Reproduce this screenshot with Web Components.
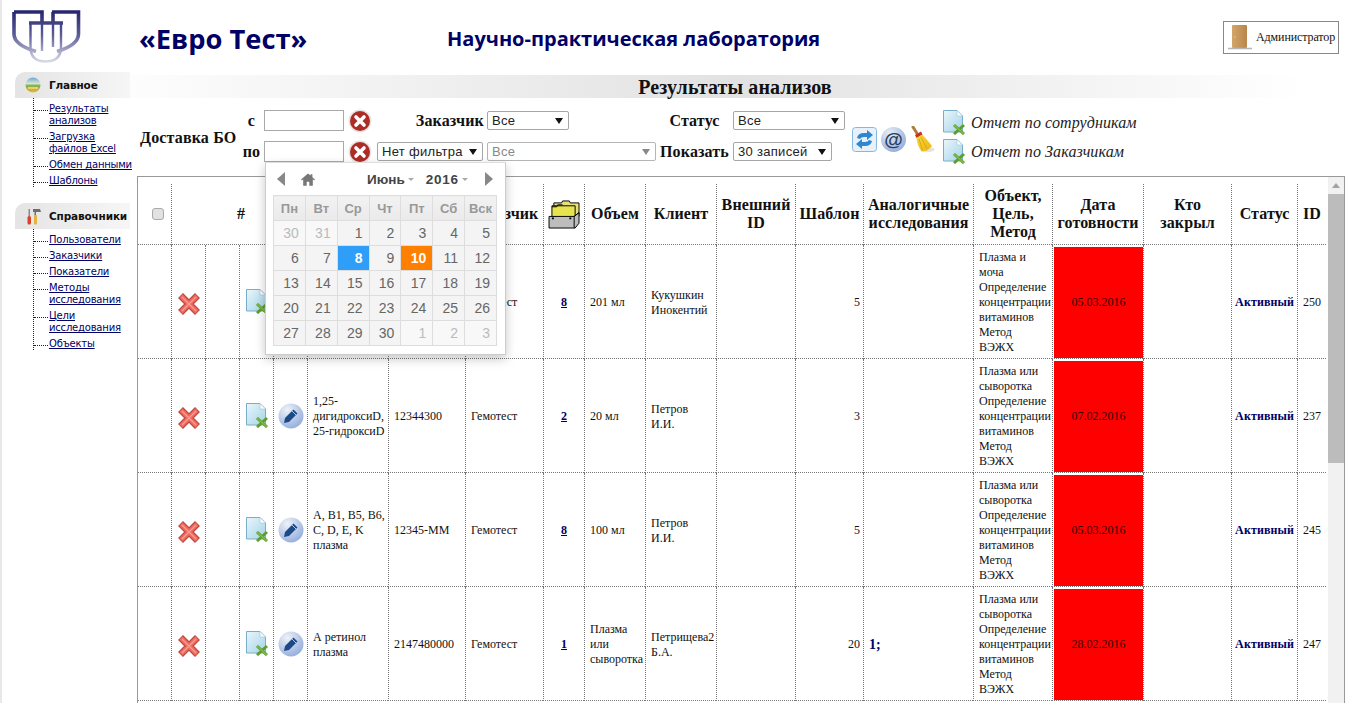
<!DOCTYPE html>
<html lang="ru"><head><meta charset="utf-8"><title>Евро Тест</title>
<style>
html,body{margin:0;height:703px;overflow:hidden;background:#fff;font-family:"Liberation Serif",serif}
</style></head><body>
<euro-app></euro-app>
<script>
const ICONS={
logo:`<svg width="70" height="56" viewBox="0 0 70 56" fill="none"><defs><linearGradient id="lg" gradientUnits="userSpaceOnUse" x1="0" y1="0" x2="0" y2="54"><stop offset="0" stop-color="#24246f"/><stop offset=".45" stop-color="#5a5a95"/><stop offset="1" stop-color="#e2e2ec"/></linearGradient></defs><g stroke="url(#lg)" stroke-width="3.6"><path d="M2 2H30V14M2 2V24Q2 35 24 41.5"/><path d="M40 2H66.5V24Q66.5 35 45 41.5M41 2V14"/><path d="M17 13H51"/><path d="M18.500 13V37Q18.500 51.500 33.500 51.500Q49 51.500 49 37V13" stroke-width="2.4"/><path d="M30 13V41M41 13V37" stroke-width="2.4"/></g></svg>`,
globe:`<svg width="16" height="16" viewBox="0 0 16 16"><defs><linearGradient id="g1" x1="0" y1="0" x2="0" y2="1"><stop offset="0" stop-color="#6fa6d8"/><stop offset=".4" stop-color="#d5e6d0"/><stop offset=".55" stop-color="#7dae4e"/><stop offset="1" stop-color="#e9b93e"/></linearGradient></defs><circle cx="8" cy="8" r="7.500" fill="url(#g1)"/><path d="M3 10h10v2H3z" fill="#f0cf63"/></svg>`,
tools:`<svg width="15" height="17" viewBox="0 0 15 17"><rect x="1.500" y="8" width="3.500" height="8.500" rx="1.500" fill="#d8432c"/><rect x="2.500" y="1" width="1.500" height="7" fill="#8a8a8a"/><path d="M7 1h7l1 3H11V4h-1v12H8.500V4H7z" fill="#6e6e6e"/><rect x="8" y="7" width="3" height="9.500" rx="1" fill="#e4b23d"/></svg>`,
door:`<svg width="24" height="25" viewBox="0 0 24 25"><defs><linearGradient id="d1" x1="0" y1="0" x2="1" y2="0"><stop offset="0" stop-color="#d3a56a"/><stop offset="1" stop-color="#b8864a"/></linearGradient></defs><rect x="4" y="0" width="15" height="23" rx="1" fill="url(#d1)"/><circle cx="7" cy="12" r=".8" fill="#f2d070"/><path d="M0 23.500H24" stroke="#b5b5b5" stroke-width="1.500"/></svg>`,
clear:`<svg width="24" height="24" viewBox="0 0 24 24"><circle cx="12" cy="12" r="11.500" fill="#e4e4e4"/><circle cx="12" cy="12" r="10" fill="#ad2c25"/><path d="M8 8l8 8M16 8l-8 8" stroke="#fff" stroke-width="3.600" stroke-linecap="round"/></svg>`,
refresh:`<svg width="25" height="25" viewBox="0 0 25 25"><rect x=".5" y=".5" width="24" height="24" rx="3" fill="#e6f1fb" stroke="#86b6e2"/><path d="M5 11q1-5 7-5h3V3l6 5-6 5V10h-3q-3 0-4 2z" fill="#2f86d0"/><path d="M20 14q-1 5-7 5h-3v3l-6-5 6-5v3h3q3 0 4-2z" fill="#2f86d0"/></svg>`,
at:`<svg width="25" height="25" viewBox="0 0 25 25"><defs><radialGradient id="a1" cx=".35" cy=".25" r=".9"><stop offset="0" stop-color="#e8edf7"/><stop offset="1" stop-color="#8aa5d6"/></radialGradient></defs><circle cx="12.500" cy="12.500" r="12.500" fill="url(#a1)"/><text x="12.500" y="18.500" text-anchor="middle" font-family="Liberation Sans" font-weight="700" font-size="19" fill="#27405f">@</text></svg>`,
broom:`<svg width="25" height="27" viewBox="0 0 25 27"><defs><linearGradient id="b1" x1="0" y1="0" x2="1" y2="1"><stop offset="0" stop-color="#f8d93a"/><stop offset="1" stop-color="#eeb312"/></linearGradient></defs><ellipse cx="18" cy="23.500" rx="6.500" ry="2.500" fill="#e2e2e2"/><path d="M3 1L8 9" stroke="#b07c40" stroke-width="3" stroke-linecap="round"/><path d="M5 9L11 5.500 12.500 8.500 6.500 12z" fill="#c8321e"/><path d="M6.500 12L12.500 8.500Q18 15 22 20Q17 26 11.500 25.500Q7 19 6.500 12z" fill="url(#b1)"/><path d="M9 13l3.500 11M11 11l6 12" stroke="#cf9a10" stroke-width=".7"/></svg>`,
doc:`<svg width="23" height="25" viewBox="0 0 23 25"><defs><linearGradient id="x1" x1="0" y1="0" x2="1" y2="1"><stop offset="0" stop-color="#eaf6fb"/><stop offset="1" stop-color="#a3d3e8"/></linearGradient></defs><path d="M.5.5H14L19.500 6V22H.5z" fill="url(#x1)" stroke="#79aecb"/><path d="M14 .5V6h5.500z" fill="#fff" stroke="#9cc5da" stroke-width=".6"/><path d="M11 15l10 9M21 15l-10 9" stroke="#5e9e2e" stroke-width="3"/><path d="M11 15l10 9" stroke="#80bd44" stroke-width="1.500"/></svg>`,
pencil:`<svg width="26" height="26" viewBox="0 0 26 26"><defs><radialGradient id="p1" cx=".35" cy=".25" r=".9"><stop offset="0" stop-color="#eef2f9"/><stop offset="1" stop-color="#88a4d8"/></radialGradient></defs><circle cx="13" cy="13" r="12.500" fill="url(#p1)"/><path d="M15.500 6.500l4 4L11 19l-5 1 1-5z" fill="#1c4a86"/><path d="M14 8l4 4" stroke="#dfe8f5" stroke-width=".8"/></svg>`,
del:`<svg width="24" height="24" viewBox="0 0 24 24"><path d="M3.500 3.500l17 17M20.500 3.500l-17 17" stroke="#b9453d" stroke-width="7" stroke-linecap="butt"/><path d="M4 4l16 16M20 4L4 20" stroke="#f0695e" stroke-width="4.600" stroke-linecap="butt"/><path d="M5 5l14 14M19 5L5 19" stroke="#f9a096" stroke-width="1.200"/></svg>`,
folder:`<svg width="33" height="29" viewBox="0 0 34 30"><path d="M6 3h8l1-2h7l1 2h9v14H6z" fill="#e8e07a" stroke="#000"/><path d="M4 6h24v12H4z" fill="#e6e34e" stroke="#000"/><path d="M4 7h5l1-2h5" fill="none" stroke="#000"/><path d="M1 17h26l5-4v11l-4 5H1z" fill="#bdbdbd" stroke="#000" stroke-linejoin="round"/><path d="M27 17v12M27 17l5-4" stroke="#000"/><path d="M4 19h2M22 19h2" stroke="#000" stroke-width="2"/></svg>`
};
function def(name,css,html,init){
  customElements.define(name,class extends HTMLElement{
    connectedCallback(){
      if(this.shadowRoot)return;
      const r=this.attachShadow({mode:"open"});
      r.innerHTML=`<style>${css}</style>`+(typeof html==="function"?html(this):html);
      if(init)init(r,this);
    }
  });
}
def("euro-icon",":host{display:inline-flex;line-height:0;vertical-align:middle}",el=>ICONS[el.getAttribute("name")]||"");

def("euro-header",`
:host{display:flex;align-items:center;height:72px;box-sizing:border-box;position:relative;font-family:"Open Sans",sans-serif;color:#000066}
.logo{margin:3px 0 0 12px;width:127px}
h1{margin:0;font-size:27.300px;font-weight:700;width:308px;padding-top:4px;white-space:nowrap}
h2{margin:0;font-size:20px;font-weight:700;padding-top:4px;flex:1;white-space:nowrap}
euro-user{margin:3px 11px 0 0}
`,`<div class="logo"><euro-icon name="logo"></euro-icon></div><h1>«Евро Тест»</h1><h2>Научно-практическая лаборатория</h2><euro-user></euro-user>`);

def("euro-user",`:host{display:flex;align-items:center;box-sizing:border-box;width:116px;height:33px;border:1px solid #888;padding:0 3px 0 4px;gap:4px;font:12px "Liberation Serif",serif;color:#111;white-space:nowrap;letter-spacing:-.1px}`,
`<euro-icon name="door"></euro-icon><span>Администратор</span>`);

def("nav-group",`
:host{display:block;margin-bottom:16px;font-family:"DejaVu Sans",sans-serif}
.head{display:flex;align-items:center;height:26px;margin-left:15px;width:115px;box-sizing:border-box;padding-left:10px;gap:8px;font-size:10.500px;letter-spacing:-.15px;font-weight:700;color:#111;background:linear-gradient(to right,#e4e4e4,#f6f6f6);border-top-left-radius:10px;white-space:nowrap}
.ic{width:16px;display:flex;justify-content:center}
ul{list-style:none;margin:0 0 0 33px;padding:5px 0 0;border-left:1px dotted #123;width:97px;box-sizing:border-box}
li{position:relative;padding-left:15px;margin-bottom:4px;font-size:10px;letter-spacing:-.2px;line-height:12px;white-space:nowrap}
li::before{content:"";position:absolute;left:0;top:7px;width:14px;border-top:1px dotted #123}
li:last-child{margin-bottom:0}
a{color:#000066;text-decoration:underline}
`,el=>`<div class="head"><span class="ic"><euro-icon name="${el.getAttribute("icon")}"></euro-icon></span>${el.getAttribute("label")}</div><ul>${el.getAttribute("items").split("|").map(t=>`<li><a href="#">${t.replace("/","<br>")}</a></li>`).join("")}</ul>`);

def("euro-sidebar",`:host{display:block;width:130px;flex:none}`,
`<nav-group icon="globe" label="Главное" items="Результаты/анализов|Загрузка/файлов Excel|Обмен данными|Шаблоны"></nav-group>
<nav-group icon="tools" label="Справочники" items="Пользователи|Заказчики|Показатели|Методы/исследования|Цели/исследования|Объекты"></nav-group>`);

def("page-title",`:host{display:block;width:1210px;height:23px;margin-top:3px;text-align:center;background:linear-gradient(to right,#fdfdfd,#e2e2e2 50%,#fff 97%);font:700 20px/24px "Liberation Serif",serif;letter-spacing:.1px;color:#111}`,`<slot></slot>`);

def("euro-select",`
:host{display:flex;align-items:center;justify-content:space-between;box-sizing:border-box;height:19px;border:1px solid #a6a6a6;border-radius:2px;padding:0 5px 0 4px;font:13px "Liberation Sans",sans-serif;color:#222;background:#fff;letter-spacing:.3px;white-space:nowrap}
:host([disabled]){color:#888;border-color:#b5b5b5}
i{width:0;height:0;border:4px solid transparent;border-top:6px solid #111;border-bottom:0;margin-left:4px}
:host([disabled]) i{border-top-color:#888}
`,`<slot></slot><i></i>`);

def("report-link",`:host{display:flex;align-items:center;gap:5px;font:italic 16px "Liberation Serif",serif;color:#222;letter-spacing:.1px;white-space:nowrap}`,
`<euro-icon name="doc"></euro-icon><slot></slot>`);

def("filter-bar",`
:host{display:grid;margin:12px 0 14px 10px;grid-template-columns:100px 24px 80px 33px 110px 82px 87px 77px 112px 98px 1fr;grid-template-rows:21px 21px;row-gap:10px;font:700 16px "Liberation Serif",serif;color:#111;letter-spacing:.15px;align-items:center}
.del{grid-row:1/3;grid-column:1;padding-top:3px;white-space:nowrap}
.lab{text-align:center;padding-right:1px;white-space:nowrap}
.lr{text-align:right;padding-right:3px;white-space:nowrap}
input{box-sizing:border-box;width:80px;height:21px;border:1px solid #a9a9a9;margin:0;padding:0;background:#fff}
.c{display:flex;align-items:center;padding-left:4px}
.st{text-align:center;white-space:nowrap}
.tools{grid-row:1/3;grid-column:10;display:flex;gap:4px;align-items:center;padding:7px 0 0 7px}
.r1{grid-row:1;grid-column:11;margin-top:4px}.r2{grid-row:2;grid-column:11}
`,`
<div class="del">Доставка БО</div>
<div class="lab" style="grid-row:1;grid-column:2">с</div><input style="grid-row:1;grid-column:3"><div class="c" style="grid-row:1;grid-column:4"><euro-icon name="clear"></euro-icon></div>
<div class="lab" style="grid-row:2;grid-column:2">по</div><input style="grid-row:2;grid-column:3"><div class="c" style="grid-row:2;grid-column:4"><euro-icon name="clear"></euro-icon></div>
<div class="lr" style="grid-row:1;grid-column:5">Заказчик</div><euro-select style="grid-row:1;grid-column:6">Все</euro-select>
<div class="st" style="grid-row:1;grid-column:8;">Статус</div><euro-select style="grid-row:1;grid-column:9">Все</euro-select>
<euro-select style="grid-row:2;grid-column:5;margin-right:4px">Нет фильтра</euro-select>
<euro-select disabled style="grid-row:2;grid-column:6/8;width:169px">Все</euro-select>
<div class="st" style="grid-row:2;grid-column:8">Показать</div><euro-select style="grid-row:2;grid-column:9;width:99px">30 записей</euro-select>
<div class="tools"><euro-icon name="refresh"></euro-icon><euro-icon name="at"></euro-icon><euro-icon name="broom"></euro-icon></div>
<report-link class="r1">Отчет по сотрудникам</report-link><report-link class="r2">Отчет по Заказчикам</report-link>`);

const MONTH=[["30","31","1","2","3","4","5"],["6","7","8","9","10","11","12"],["13","14","15","16","17","18","19"],["20","21","22","23","24","25","26"],["27","28","29","30","1","2","3"]];
def("date-picker",`
:host{position:absolute;left:135px;top:90px;z-index:5;box-sizing:border-box;width:241px;height:193px;background:#fff;border:1px solid #ccc;border-top:1px solid #ddd;box-shadow:0 4px 10px rgba(0,0,0,.22);padding:5px 8px 0 7px;font:13px "Liberation Sans",sans-serif;color:#444}
.nav{display:flex;align-items:center;height:22px;margin-bottom:5px;position:relative}
.tri{width:0;height:0;border:7px solid transparent}
.p{border-right:8px solid #888;border-left:0;margin-left:4px}
.n{border-left:8px solid #888;border-right:0;margin-left:auto;margin-right:4px}
.home{margin-left:16px;line-height:0}
.m{font-weight:700;margin-left:52px;white-space:nowrap;font-size:13.500px;color:#444}
.m+.m{margin-left:12px;letter-spacing:.8px}
.m i{display:inline-block;border:3.500px solid transparent;border-top:3.500px solid #aaa;border-bottom:0;vertical-align:middle;margin-left:3px}
table{border-collapse:collapse;table-layout:fixed;width:224px}
td,th{border:1px solid #ddd;height:25px;padding:0 6px;box-sizing:border-box;background:#f4f4f4;text-align:right;font-size:14px;font-weight:400;color:#666}
th{text-align:center;color:#999;font-weight:700;font-size:13px;padding:0;background:linear-gradient(#f2f2f2,#eaeaea)}
td.o{color:#bbb;background:#f8f8f8}
td.s{background:#2e9ef8;color:#fff;font-weight:700}
td.t{background:#ff8000;color:#fff;font-weight:700}
`,`<div class="nav"><span class="tri p"></span><span class="home"><svg width="14" height="13" viewBox="0 0 16 14"><path d="M8 0L0 7l1 1 1.500-1.200V14h4V9.500h3V14h4V6.800L15 8l1-1-3-2.700V1h-2v1.500z" fill="#777"/></svg></span>
<span class="m">Июнь<i></i></span><span class="m">2016<i></i></span><span class="tri n"></span></div>
<table><tr>${["Пн","Вт","Ср","Чт","Пт","Сб","Вск"].map(d=>`<th>${d}</th>`).join("")}</tr>
${MONTH.map((w,i)=>`<tr>${w.map((d,j)=>{let c="";if((i==0&&j<2)||(i==4&&j>3))c="o";if(d=="8")c="s";if(d=="10")c="t";return `<td class="${c}">${d}</td>`}).join("")}</tr>`).join("")}</table>`);

const WIDTHS=[33,34,34,34,34,81,77,78,41,61,71,79,68,110,79,91,88,66,29];
const PLASMA="Плазма или<br>сыворотка<br>Определение<br>концентрации<br>витаминов<br>Метод<br>ВЭЖХ";
const ROWS=[
{p:"",c:"",n:"8",v:"201 мл",k:"Кукушкин<br>Инокентий",t:"5",a:"",o:"Плазма и<br>моча<br>Определение<br>концентрации<br>витаминов<br>Метод<br>ВЭЖХ",d:"05.03.2016",id:"250"},
{p:"1,25-<br>дигидроксиD,<br>25-гидроксиD",c:"12344300",n:"2",v:"20 мл",k:"Петров<br>И.И.",t:"3",a:"",o:PLASMA,d:"07.02.2016",id:"237"},
{p:"A, B1, B5, B6,<br>C, D, E, K<br>плазма",c:"12345-ММ",n:"8",v:"100 мл",k:"Петров<br>И.И.",t:"5",a:"",o:PLASMA,d:"05.03.2016",id:"245"},
{p:"А ретинол<br>плазма",c:"2147480000",n:"1",v:"Плазма<br>или<br>сыворотка",k:"Петрищева2<br>Б.А.",t:"20",a:"1;",o:PLASMA,d:"28.02.2016",id:"247"}
];
def("results-table",`
:host{display:flex;box-sizing:border-box;margin-left:7px;width:1208px;height:530px;border:1px solid #999;border-bottom:0;padding-top:7px;overflow:hidden;position:relative;color:#111}
table{border-collapse:separate;border-spacing:0;table-layout:fixed;width:1188px;flex:none;align-self:flex-start;font:12px/15px "Liberation Serif",serif}
th{height:61px;padding:0;border-bottom:1px dotted #777;border-left:1px dotted #777;font:700 16px/18px "Liberation Serif",serif;letter-spacing:.1px;overflow:hidden;box-sizing:border-box}
td{height:114px;box-sizing:border-box;padding:2px 3px 0 5px;border-bottom:1px dotted #777;border-left:1px dotted #777;overflow:hidden}
th:first-child,td:first-child{border-left:0}
td.ic{padding:0;text-align:center}
td.ic.x{padding-top:4px}
td.ic.dc{padding-left:2px}
td.r{text-align:right}
td.c{text-align:center;padding:2px 0 0}
td.o{padding-right:2px}
td.date{background:#f00;background-clip:content-box;padding:2px 0 0 1px;text-align:center;color:#300}
td.date span{display:block}
a,.a{color:#000066;font-weight:700}
.a{font-size:14px}
.st{color:#000066;font-weight:700;letter-spacing:.1px}
.cb{appearance:none;display:block;width:12px;height:12px;margin:0 0 0 14px;border:1px solid #aaa;border-radius:3px;background:#e2e2e2}
.h{padding-left:3px}
.bar{width:16px;margin-left:2px;background:#f1f1f1;height:530px;position:relative;flex:none;margin-top:-7px}
.bar i{position:absolute;left:4px;top:6px;border:4px solid transparent;border-bottom:5px solid #a3a3a3;border-top:0}
.bar b{position:absolute;left:0;right:0;top:17px;height:269px;background:#bcbcbc}
`,`<table><colgroup>${WIDTHS.map(w=>`<col style="width:${w}px">`).join("")}</colgroup>
<tr><th><input class="cb" type="checkbox"></th><th colspan="4" class="h">#</th><th></th><th></th><th>Заказчик</th>
<th><euro-icon name="folder"></euro-icon></th><th>Объем</th><th>Клиент</th><th>Внешний<br>ID</th><th>Шаблон</th><th>Аналогичные<br>исследования</th><th>Объект,<br>Цель,<br>Метод</th><th>Дата<br>готовности</th><th>Кто<br>закрыл</th><th>Статус</th><th>ID</th></tr>
${ROWS.map(r=>`<tr><td></td><td class="ic x"><euro-icon name="del"></euro-icon></td><td></td><td class="ic dc"><euro-icon name="doc"></euro-icon></td><td class="ic"><euro-icon name="pencil"></euro-icon></td>
<td>${r.p}</td><td>${r.c}</td><td>Гемотест</td><td class="c"><a href="#">${r.n}</a></td><td>${r.v}</td><td>${r.k}</td><td></td><td class="r">${r.t}</td><td><span class="a">${r.a}</span></td><td class="o">${r.o}</td><td class="date"><span>${r.d}</span></td><td></td><td class="c st">Активный</td><td class="c">${r.id}</td></tr>`).join("")}
</table><div class="bar"><i></i><b></b></div>`);

def("euro-main",`:host{display:block;position:relative;flex:1;min-width:0}`,
`<page-title>Результаты анализов</page-title><filter-bar></filter-bar><results-table></results-table><date-picker></date-picker>`);

def("euro-app",`:host{display:block;width:1350px;height:703px;overflow:hidden;box-sizing:border-box;border-left:2px solid #e8e8e8;margin:0}
.b{display:flex;margin-left:-2px}`,`<euro-header style="margin-left:-2px"></euro-header><div class="b"><euro-sidebar></euro-sidebar><euro-main></euro-main></div>`);
</script>
</body></html>
